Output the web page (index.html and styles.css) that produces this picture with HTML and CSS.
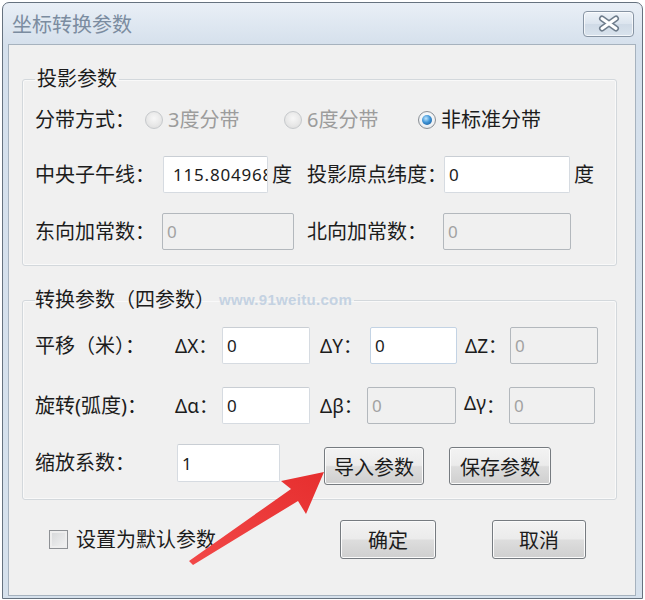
FILE: index.html
```html
<!DOCTYPE html>
<html lang="zh-CN">
<head>
<meta charset="utf-8">
<title>坐标转换参数</title>
<link rel="stylesheet" href="styles.css">
</head>
<body>
<div class="window">
  <div class="titlebar">
    <span class="title">坐标转换参数</span>
    <span class="close">
      <svg width="24" height="17" viewBox="0 0 24 17">
        <path d="M5 3.5 L19 13.5 M19 3.5 L5 13.5" stroke="#6f7d8c" stroke-width="6" stroke-linecap="round" fill="none"/>
        <path d="M5 3.5 L19 13.5 M19 3.5 L5 13.5" stroke="#ffffff" stroke-width="3" stroke-linecap="round" fill="none"/>
      </svg>
    </span>
  </div>
  <div class="client">
    <fieldset class="group group-proj">
      <legend>投影参数</legend>
      <div class="row row-radio">
        <span class="lbl w-110">分带方式：</span>
        <label class="radio disabled w-139"><span class="rb"></span>3度分带</label>
        <label class="radio disabled w-134"><span class="rb"></span>6度分带</label>
        <label class="radio"><span class="rb on"></span>非标准分带</label>
      </div>
      <div class="row row-field gap-20">
        <span class="lbl w-128">中央子午线：</span>
        <input class="tb w-105 tb-long" type="text" value="115.804968">
        <span class="unit w-39">度</span>
        <span class="lbl w-137">投影原点纬度：</span>
        <input class="tb w-126" type="text" value="0">
        <span class="unit">度</span>
      </div>
      <div class="row row-field gap-20">
        <span class="lbl w-127">东向加常数：</span>
        <input class="tb w-132" type="text" value="0" disabled>
        <span class="lbl w-136 ml-13">北向加常数：</span>
        <input class="tb w-128" type="text" value="0" disabled>
      </div>
    </fieldset>

    <fieldset class="group group-trans">
      <legend>转换参数（四参数）<span class="watermark">www.91weitu.com</span></legend>
      <div class="row row-field">
        <span class="lbl w-140">平移（米）：</span>
        <span class="dl w-47">ΔX：</span>
        <input class="tb w-88" type="text" value="0">
        <span class="dl w-50 ml-10">ΔY：</span>
        <input class="tb w-87 focus" type="text" value="0">
        <span class="dl w-45 ml-8">ΔZ：</span>
        <input class="tb w-88" type="text" value="0" disabled>
      </div>
      <div class="row row-field gap-23">
        <span class="lbl w-140">旋转(弧度)：</span>
        <span class="dl w-47">Δα：</span>
        <input class="tb w-88" type="text" value="0">
        <span class="dl w-47 ml-10">Δβ：</span>
        <input class="tb w-89" type="text" value="0" disabled>
        <span class="dl w-45 ml-8"><span class="lowsup">Δγ</span>：</span>
        <input class="tb w-86" type="text" value="0" disabled>
      </div>
      <div class="row row-scale gap-20">
        <span class="lbl w-142">缩放系数：</span>
        <input class="tb w-103 tall" type="text" value="1">
        <button class="btn btn-small ml-44" type="button">导入参数</button>
        <button class="btn btn-wide ml-25" type="button">保存参数</button>
      </div>
    </fieldset>

    <div class="footer">
      <label class="check"><span class="cb"></span>设置为默认参数</label>
      <button class="btn btn-ok" type="button">确定</button>
      <button class="btn btn-cancel" type="button">取消</button>
    </div>
  </div>
</div>

<svg class="arrow" width="645" height="600" viewBox="0 0 645 600">
  <defs>
    <linearGradient id="ar" x1="0" y1="1" x2="1" y2="0">
      <stop offset="0" stop-color="#f24848"/>
      <stop offset="1" stop-color="#e62e2e"/>
    </linearGradient>
  </defs>
  <polygon points="324,472 306,514 298,501 193,565 189,561 291,489 281,481" fill="url(#ar)"/>
</svg>
</body>
</html>
```
FILE: styles.css
```css
* { box-sizing: border-box; }

body {
  margin: 0;
  width: 645px;
  height: 600px;
  overflow: hidden;
  position: relative;
  background: #ffffff;
  font-family: "Noto Sans", "Noto Sans CJK SC", sans-serif;
  color: #1c1c1c;
}

.window {
  margin: 2px 0 0 2px;
  width: 641px;
  height: 597px;
  border: 1px solid #66727f;
  border-radius: 7px 7px 0 0;
  background: linear-gradient(#e9eff6 0px, #d5e0ec 42px, #d6e1ec 100%);
  padding: 0 6px 2px 5px;
  display: flex;
  flex-direction: column;
}

.titlebar {
  height: 41px;
  flex: none;
  display: flex;
  align-items: center;
  justify-content: space-between;
  padding-left: 4px;
  padding-right: 2px;
}

.title {
  font-size: 20px;
  line-height: 24px;
  color: #7b8ca0;
  padding-top: 2px;
}

.close {
  width: 51px;
  height: 26px;
  border: 1px solid #8794a3;
  border-radius: 4px;
  background: linear-gradient(#eef3f8, #dbe4ee 50%, #cfdae6 51%, #d9e3ed);
  box-shadow: inset 0 0 0 1px rgba(255,255,255,0.7);
  display: flex;
  align-items: center;
  justify-content: center;
}

.client {
  flex: 1;
  border: 1px solid #a6b2be;
  background: #f0f0f0;
  padding: 22px 18px 0 13px;
}

.group {
  margin: 0;
  border: 1px solid #d3d8dc;
  border-radius: 3px;
  padding: 13px 0 15px 12px;
  box-shadow: inset 0 0 0 1px #f9f9f9;
}

.group legend {
  padding: 0 2px;
  font-size: 20px;
  line-height: 24px;
  color: #1c1c1c;
}

.group-trans {
  margin-top: 22px;
  padding-top: 15px;
  padding-bottom: 14px;
}

.group-trans legend {
  padding: 0 2px 0 0;
}

.watermark {
  font-family: "Liberation Sans", sans-serif;
  font-weight: bold;
  font-size: 15px;
  color: #c4d2e2;
  margin-left: 4px;
  letter-spacing: 0.3px;
  vertical-align: 2px;
}

.row {
  display: flex;
  align-items: center;
}

.row-radio { height: 32px; }
.row-field { height: 37px; }
.row-scale { height: 41px; align-items: flex-start; }

.gap-20 { margin-top: 20px; }
.gap-23 { margin-top: 23px; }

.lbl, .unit, .dl, .radio, .check {
  font-size: 20px;
  line-height: 24px;
  white-space: nowrap;
  flex: none;
}

.row-scale .lbl { margin-top: 7px; }

.dl { font-size: 19px; }
.lowsup { position: relative; top: -3px; }

.unit { padding-left: 4px; }

.w-45 { width: 45px; }
.w-47 { width: 47px; }
.w-50 { width: 50px; }
.w-86 { width: 86px; }
.w-87 { width: 87px; }
.w-88 { width: 88px; }
.w-89 { width: 89px; }
.w-103 { width: 103px; }
.w-105 { width: 105px; }
.w-110 { width: 110px; }
.w-126 { width: 126px; }
.w-127 { width: 127px; }
.w-128 { width: 128px; }
.w-132 { width: 132px; }
.w-134 { width: 134px; }
.w-136 { width: 136px; }
.w-137 { width: 137px; }
.w-139 { width: 139px; }
.w-140 { width: 140px; }
.w-142 { width: 142px; }
.w-39 { width: 39px; }

.ml-8 { margin-left: 8px; }
.ml-10 { margin-left: 10px; }
.ml-13 { margin-left: 13px; }
.ml-25 { margin-left: 25px; }
.ml-44 { margin-left: 44px; }

.radio {
  display: flex;
  align-items: center;
}

.radio.disabled { color: #9c9c9c; }

.rb {
  width: 18px;
  height: 18px;
  border-radius: 50%;
  border: 1px solid #c6c9cc;
  background: radial-gradient(circle at 50% 40%, #f7f7f7 0%, #e8e8e8 55%, #d9d9d9 100%);
  margin: 0 5px 0 0;
  flex: none;
  display: flex;
  align-items: center;
  justify-content: center;
}

.rb.on {
  border-color: #8a8f95;
  background: radial-gradient(circle at 50% 40%, #ffffff 0%, #eef1f4 60%, #d6dbe0 100%);
}

.rb.on::after {
  content: "";
  width: 10px;
  height: 10px;
  border-radius: 50%;
  background: radial-gradient(circle at 40% 35%, #bfe6ff 0%, #3f94d6 45%, #0f4f8f 100%);
}

.tb {
  height: 37px;
  flex: none;
  border: 1px solid #d6dbe1;
  border-top-color: #c9ced4;
  border-radius: 2px;
  background: #ffffff;
  font-family: "Noto Sans", sans-serif;
  font-size: 17px;
  letter-spacing: 0.8px;
  color: #1c1c1c;
  padding: 0 4px;
  margin: 0;
  outline: none;
}

.tb.tall { height: 38px; }

.tb.tb-long { padding-left: 9px; padding-right: 0; }

.tb.focus { border-color: #c3d3e4; }

.tb:disabled {
  background: #f0f0f0;
  border: 1px solid #b3b8bd;
  color: #a2a2a2;
}

.btn {
  height: 38px;
  flex: none;
  border: 1px solid #767b80;
  border-radius: 3px;
  background: linear-gradient(#f3f3f3 0%, #ebebeb 48%, #dddddd 52%, #cfcfcf 100%);
  box-shadow: inset 0 0 0 1px #fbfbfb;
  font-family: "Noto Sans", "Noto Sans CJK SC", sans-serif;
  font-size: 20px;
  color: #1c1c1c;
  padding: 0;
  margin-top: 3px;
}

.btn-small { width: 100px; }
.btn-wide { width: 102px; }

.footer {
  margin-top: 20px;
  padding-left: 27px;
  display: flex;
  align-items: center;
  height: 39px;
}

.check {
  width: 291px;
  display: flex;
  align-items: center;
}

.cb {
  width: 19px;
  height: 19px;
  border: 1px solid #8e9195;
  background: linear-gradient(135deg, #d4d6d8, #f4f4f4);
  box-shadow: inset 0 0 0 2px #eeeeee;
  margin-right: 8px;
  flex: none;
}

.btn-ok { width: 96px; height: 39px; margin-top: 0; }
.btn-cancel { width: 94px; height: 39px; margin-top: 0; margin-left: 56px; }

.arrow {
  position: absolute;
  left: 0;
  top: 0;
  pointer-events: none;
}
```
